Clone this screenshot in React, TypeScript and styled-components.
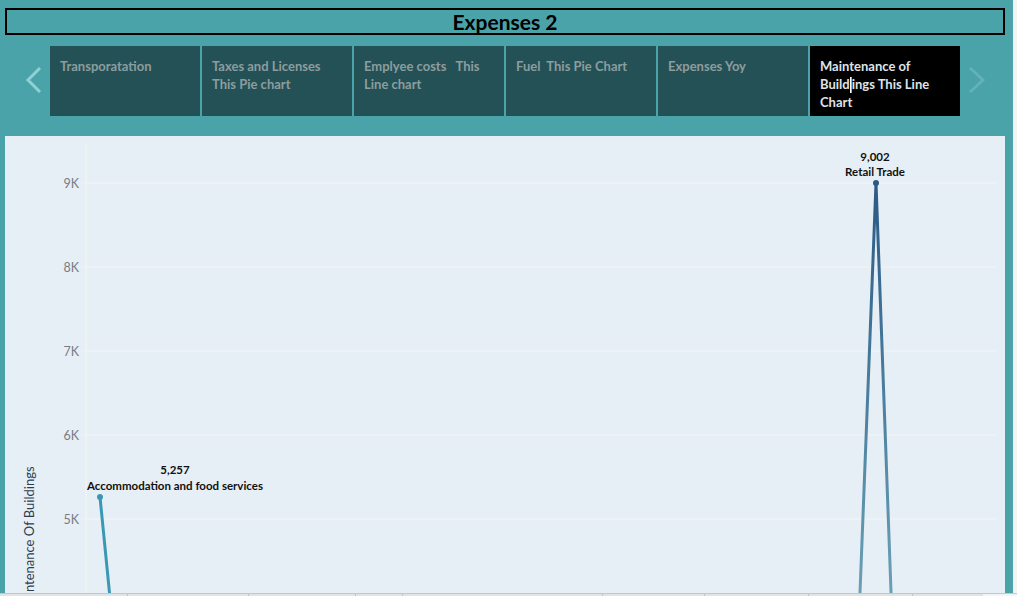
import React from "react";
import styled, { createGlobalStyle } from "styled-components";

const Global = createGlobalStyle`
  html, body { margin: 0; padding: 0; background: #f3f3f3; overflow: hidden; }
  body { font-family: Lato, "Noto Sans", sans-serif; }
`;

const Page = styled.div`
  width: 1013px;
  height: 593px;
  background: #49a3a9;
  box-sizing: border-box;
  padding: 8px 8px 0 5px;
  display: flex;
  flex-direction: column;
  overflow: hidden;
`;

const TitleBox = styled.div`
  height: 27px;
  box-sizing: border-box;
  border: 2px solid #000;
  display: flex;
  align-items: center;
  justify-content: center;
  font-family: Lato, sans-serif;
  font-weight: 700;
  font-size: 21px;
  color: #000;
`;

const TabStrip = styled.div`
  margin-top: 11px;
  height: 70px;
  display: flex;
`;

const ArrowBox = styled.div<{ $w: number }>`
  width: ${(p) => p.$w}px;
  flex: none;
  height: 70px;
`;

const Tabs = styled.div`
  display: flex;
  gap: 2px;
`;

const Tab = styled.div<{ $active?: boolean }>`
  width: 150px;
  height: 70px;
  box-sizing: border-box;
  padding: 11px 12px 0 10px;
  background: ${(p) => (p.$active ? "#000" : "#245156")};
  color: ${(p) => (p.$active ? "#dfe3ea" : "#8c9d9e")};
  font-family: Lato, sans-serif;
  font-weight: 700;
  font-size: 13px;
  line-height: 18px;
  white-space: pre-wrap;
`;

const NoWrap = styled.span`
  white-space: nowrap;
`;

const Caret = styled.span`
  display: inline-block;
  width: 1px;
  height: 16px;
  background: #fff;
  box-shadow: 1px 0 0 #e89a3c;
  vertical-align: -4px;
  margin-right: 1px;
`;

const ChartPanel = styled.div`
  margin-top: 20px;
  height: 457px;
  background: #e6eff5;
  overflow: hidden;
  svg { display: block; }
`;

const AxisStrip = styled.div`
  height: 3px;
  border-top: 1px solid #c6c6c6;
  background: #f4f4f4;
  display: flex;
`;

const AxisCell = styled.div<{ $first?: boolean }>`
  flex: none;
  height: 3px;
  background: #e3e3e3;
  box-sizing: border-box;
  border-left: ${(p) => (p.$first ? "none" : "1px solid #c4c4c4")};
`;

const tabs = [
  "Transporatation",
  "Taxes and Licenses This Pie chart",
  "Emplyee costs   This Line chart",
  "Fuel  This Pie Chart",
  "Expenses Yoy",
];

const cellWidths = [127, 121, 107, 47, 200, 102, 104, 104, 71];

const gridY = [
  { y: 47, l: "9K" },
  { y: 131, l: "8K" },
  { y: 215, l: "7K" },
  { y: 299, l: "6K" },
  { y: 383, l: "5K" },
];

function Chart() {
  return (
    <svg width={1000} height={457} viewBox="0 0 1000 457">
      <defs>
        <linearGradient id="peak" x1="0" y1="47" x2="0" y2="457" gradientUnits="userSpaceOnUse">
          <stop offset="0" stopColor="#2b5a86" />
          <stop offset="1" stopColor="#6aa0b6" />
        </linearGradient>
      </defs>
      {gridY.map((g) => (
        <g key={g.l}>
          <line x1={77} x2={992} y1={g.y} y2={g.y} stroke="#f1f6f7" strokeWidth={1.2} />
          <text
            x={74}
            y={g.y + 4.5}
            textAnchor="end"
            fontFamily="Lato, sans-serif"
            fontSize={12.5}
            fill="#787d82"
          >
            {g.l}
          </text>
        </g>
      ))}
      <line x1={81} x2={81} y1={8} y2={457} stroke="#f1f6f7" strokeWidth={1.2} />
      <text
        transform="translate(29 404) rotate(-90)"
        textAnchor="middle"
        fontFamily="Lato, sans-serif"
        fontSize={13}
        fill="#2f3e4f"
      >
        Maintenance Of Buildings
      </text>
      <polyline points="95,361 106,472" fill="none" stroke="#3b98b5" strokeWidth={3} />
      <circle cx={95} cy={361} r={3} fill="#3b98b5" />
      <polyline
        points="854.4,472 871,47 886.6,472"
        fill="none"
        stroke="url(#peak)"
        strokeWidth={3}
        strokeLinejoin="miter"
      />
      <circle cx={871} cy={47} r={3} fill="#2b5a86" />
      <g fontFamily="Lato, sans-serif" fontSize={11.5} fontWeight={700} fill="#111" textAnchor="middle">
        <text x={170} y={338}>5,257</text>
        <text x={170} y={354}>Accommodation and food services</text>
        <text x={870} y={25}>9,002</text>
        <text x={870} y={40}>Retail Trade</text>
      </g>
    </svg>
  );
}

export default function App() {
  return (
    <>
      <Global />
      <Page>
        <TitleBox>Expenses 2</TitleBox>
        <TabStrip>
          <ArrowBox $w={45}>
            <svg width={45} height={70}>
              <polyline points="35,22 23,34 35,46" fill="none" stroke="#90d0d4" strokeWidth={3} />
            </svg>
          </ArrowBox>
          <Tabs>
            {tabs.map((t) => (
              <Tab key={t}>{t}</Tab>
            ))}
            <Tab $active>
              Maintenance of{" "}
              <NoWrap>
                Build
                <Caret />
                ings
              </NoWrap>{" "}
              This Line Chart
            </Tab>
          </Tabs>
          <ArrowBox $w={45}>
            <svg width={45} height={70}>
              <polyline points="10,22 23,34 10,46" fill="none" stroke="#62b2b7" strokeWidth={3} />
            </svg>
          </ArrowBox>
        </TabStrip>
        <ChartPanel>
          <Chart />
        </ChartPanel>
      </Page>
      <AxisStrip>
        {cellWidths.map((w, i) => (
          <AxisCell key={i} $first={i === 0} style={{ width: w }} />
        ))}
      </AxisStrip>
    </>
  );
}
